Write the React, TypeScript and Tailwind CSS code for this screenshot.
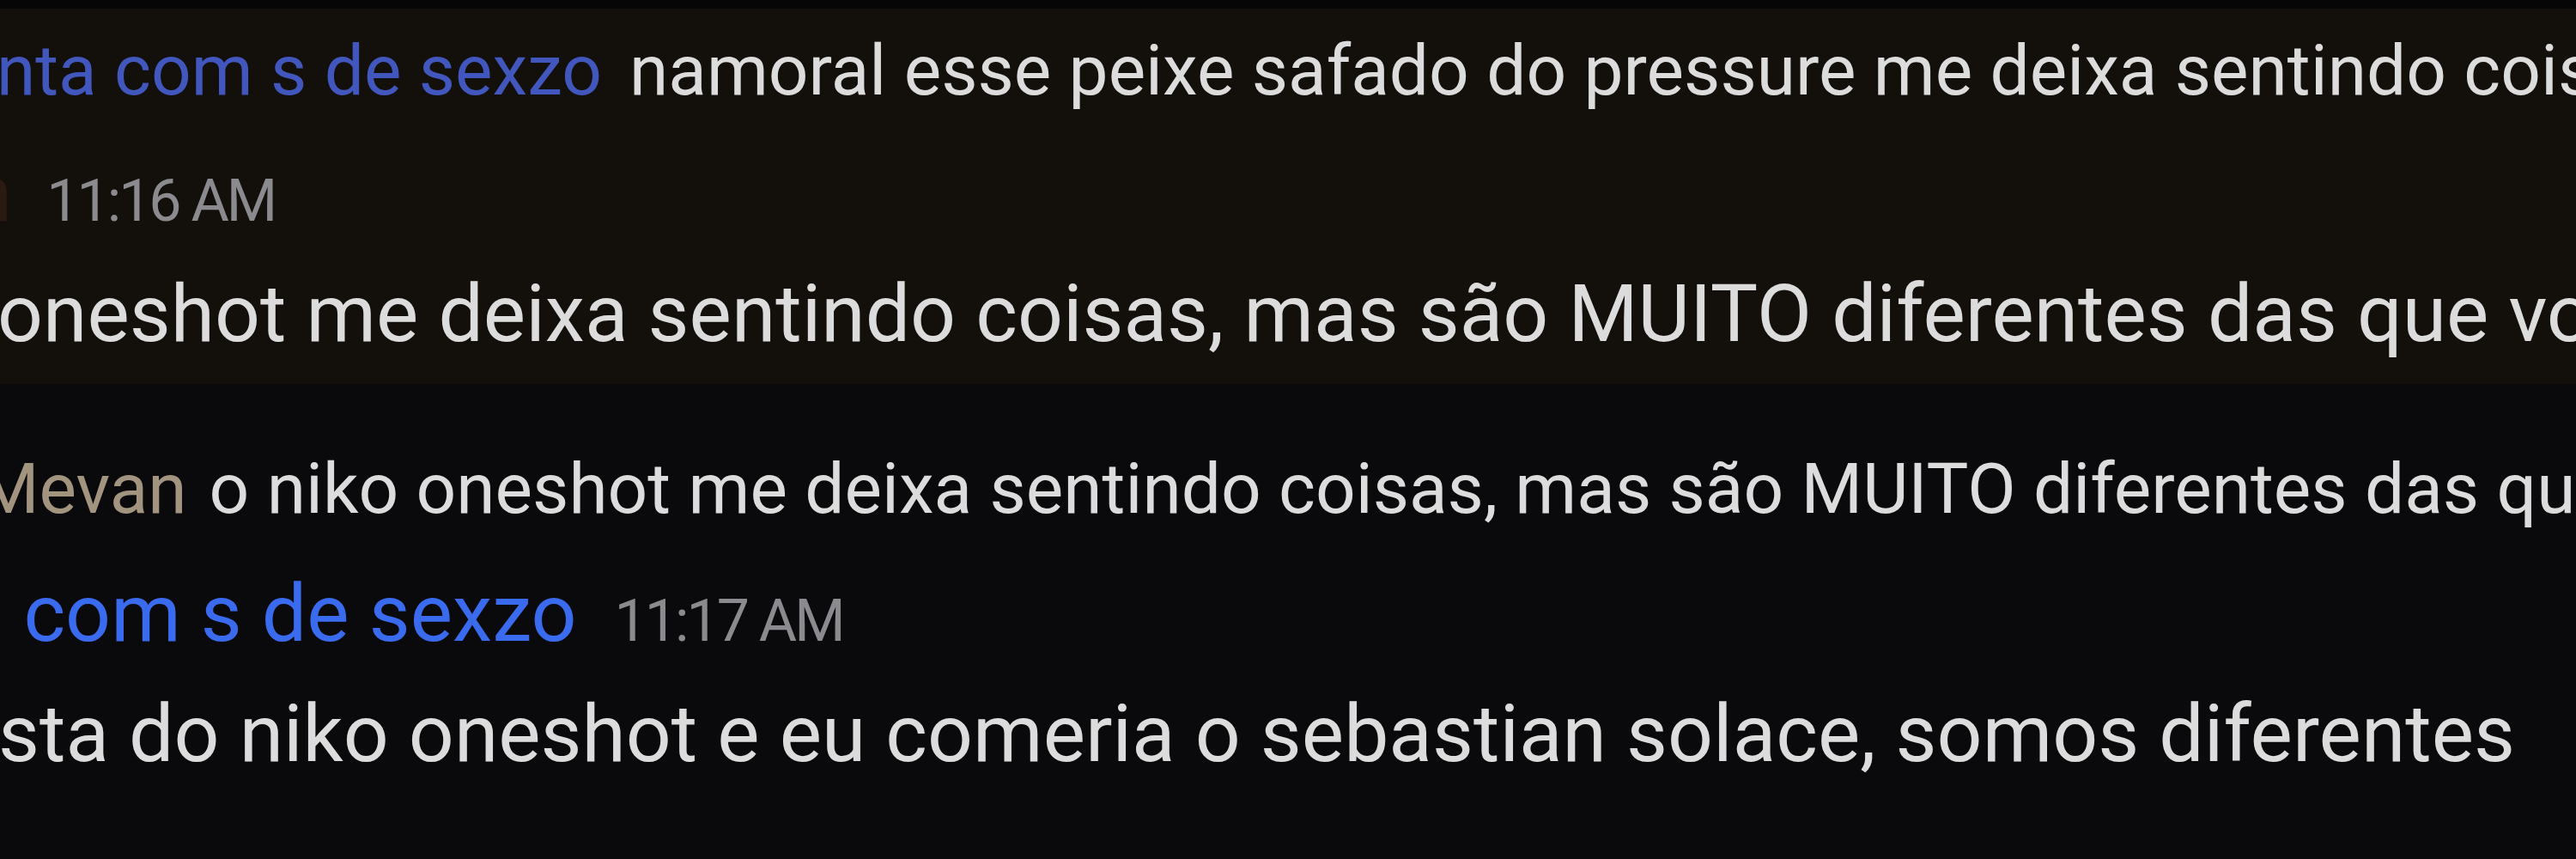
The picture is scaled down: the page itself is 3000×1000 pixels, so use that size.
import React from "react";

const roboto = "font-['Roboto',_'Noto_Sans',_sans-serif]";

export default function App() {
  return (
    <div className={`w-[3000px] h-[1000px] overflow-hidden bg-[#0a0a0d] ${roboto} whitespace-nowrap`}>
      {/* top strip */}
      <div className="h-[10px] bg-[#060606]" />

      {/* highlighted (warm) message group */}
      <div className="h-[437px] bg-[#130f0b] pt-[22px] overflow-hidden">
        {/* reply preview */}
        <div className="flex items-baseline h-[100px] leading-[100px] text-[82px]">
          <span className="ml-[-4px] text-[#4257bd]">nta com s de sexzo</span>
          <span className="ml-[32px] text-[#dcdcdc]">
            namoral esse peixe safado do pressure me deixa sentindo coisas
          </span>
        </div>

        {/* header */}
        <div className="mt-[34px] flex items-baseline h-[120px] leading-[120px]">
          <span className="ml-[-262px] text-[93px] text-[#2a1a12]">Mevan</span>
          <span className="ml-[40px] text-[68px] tracking-[-3px] text-[#8a8a8f]">11:16 AM</span>
        </div>

        {/* message */}
        <div className="mt-[20px] h-[120px] leading-[120px] text-[93px] text-[#dcdcdc]">
          <span className="ml-[-3px]">oneshot me deixa sentindo coisas, mas são MUITO diferentes das que você</span>
        </div>
      </div>

      {/* next message group */}
      <div className="pt-[72px]">
        {/* reply preview */}
        <div className="flex items-baseline h-[100px] leading-[100px] text-[82px]">
          <span className="ml-[-26px] text-[#a39480]">Mevan</span>
          <span className="ml-[26px] text-[#dcdcdc]">
            o niko oneshot me deixa sentindo coisas, mas são MUITO diferentes das que você
          </span>
        </div>

        {/* header */}
        <div className="mt-[36px] flex items-baseline h-[120px] leading-[120px]">
          <span className="ml-[-128px] text-[93px] text-[#3a6aee]">nta com s de sexzo</span>
          <span className="ml-[44px] text-[68px] tracking-[-3px] text-[#8a8a8f]">11:17 AM</span>
        </div>

        {/* message */}
        <div className="mt-[20px] h-[120px] leading-[120px] text-[93px] text-[#dcdcdc]">
          <span className="ml-[-2px]">sta do niko oneshot e eu comeria o sebastian solace, somos diferentes</span>
        </div>
      </div>
    </div>
  );
}
